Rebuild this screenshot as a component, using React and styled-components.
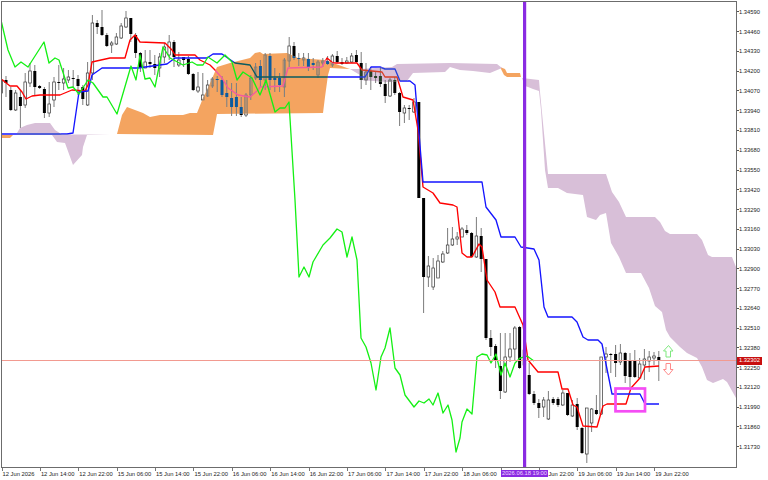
import styled, { createGlobalStyle } from 'styled-components';

const GlobalStyle = createGlobalStyle`
  html, body {
    margin: 0;
    padding: 0;
    background: #fff;
  }
`;

const Page = styled.div`
  position: relative;
  width: 768px;
  height: 480px;
  overflow: hidden;
  background: #fff;
  font-family: 'Liberation Sans', Arial, sans-serif;
  font-size: 5.8px;
  color: #1c1c1c;
`;

const ChartRow = styled.div`
  display: flex;
  height: 468px;
  padding: 1px 0 0 1px;
  box-sizing: border-box;
`;

const Plot = styled.div`
  width: 736px;
  height: 467px;
  box-sizing: border-box;
  border: 1px solid #6c6c6c;
  flex: none;
`;

const ChartSvg = styled.svg`
  display: block;
  width: 734px;
  height: 465px;
  filter: blur(0.3px);
`;

const PriceAxis = styled.div`
  display: flex;
  flex-direction: column;
  padding-top: 1px;
`;

const PriceRow = styled.div`
  display: flex;
  align-items: center;
  height: 19.77px;
  white-space: nowrap;

  &::before {
    content: '';
    width: 2px;
    height: 1px;
    background: #555;
  }
`;

const TimeAxis = styled.div`
  display: flex;
  padding-left: 1.5px;
`;

const TimeCell = styled.div`
  flex: none;
  width: 38.4px;
  height: 12px;
  box-sizing: border-box;
  padding: 2.5px 0 0 ${({ $inset }) => $inset || 1}px;
  white-space: nowrap;
  position: relative;

  &::before {
    content: '';
    position: absolute;
    left: 0;
    top: 0;
    width: 1px;
    height: 3px;
    background: #777;
  }
`;

const PriceTag = styled.div`
  position: absolute;
  left: 737px;
  top: 357px;
  width: 25px;
  height: 7.5px;
  line-height: 7.5px;
  padding-left: 2px;
  box-sizing: border-box;
  background: #c80f0f;
  color: #fff;
  white-space: nowrap;
`;

const DateTag = styled.div`
  position: absolute;
  left: 501px;
  top: 470px;
  width: 47px;
  height: 7px;
  line-height: 7px;
  text-align: center;
  background: #8a2be2;
  color: #eadcff;
  white-space: nowrap;
`;

const prices = [
  '1.34590', '1.34460', '1.34330', '1.34200', '1.34070', '1.33940', '1.33810', '1.33680',
  '1.33550', '1.33420', '1.33290', '1.33160', '1.33030', '1.32900', '1.32770', '1.32640',
  '1.32510', '1.32380', '1.32250', '1.32120', '1.31990', '1.31860', '1.31730',
];

// the date tag hides the two labels under it, only the end of 18 Jun 22:00 shows
const times = [
  { label: '12 Jun 2026' }, { label: '12 Jun 14:00' }, { label: '12 Jun 22:00' }, { label: '15 Jun 06:00' },
  { label: '15 Jun 14:00' }, { label: '15 Jun 22:00' }, { label: '16 Jun 06:00' }, { label: '16 Jun 14:00' },
  { label: '16 Jun 22:00' }, { label: '17 Jun 06:00' }, { label: '17 Jun 14:00' }, { label: '17 Jun 22:00' },
  { label: '18 Jun 06:00' }, { label: '' }, { label: 'Jun 22:00', inset: 9.5 },
  { label: '19 Jun 06:00' }, { label: '19 Jun 14:00' }, { label: '19 Jun 22:00' },
];

// wick top, body top, body bottom, wick bottom, black?
const candles = [
  [76, 80, 93, 95, 0], [76, 80, 83, 97, 1], [87, 90, 110, 111, 1], [90, 93, 110, 111, 0],
  [90, 97, 106, 128, 1], [73, 82, 105, 108, 0], [63, 71, 83, 87, 0], [65, 71, 87, 95, 1],
  [85, 86, 88, 89, 1], [87, 89, 113, 118, 1], [82, 104, 113, 117, 0], [77, 82, 100, 107, 0],
  [65, 82, 83, 90, 1], [68, 79, 83, 90, 0], [70, 77, 80, 83, 0], [70, 78, 79, 87, 1],
  [75, 79, 86, 95, 1], [85, 87, 99, 105, 1], [62, 73, 105, 106, 0], [15, 23, 73, 80, 0],
  [20, 23, 27, 34, 1], [10, 27, 35, 36, 1], [33, 35, 46, 47, 1], [41, 43, 45, 53, 0],
  [33, 37, 44, 45, 0], [23, 26, 38, 39, 0], [11, 18, 27, 28, 0], [18, 18, 34, 42, 1],
  [33, 35, 53, 58, 1], [52, 53, 68, 72, 1], [50, 62, 68, 68, 0], [50, 62, 64, 68, 1],
  [55, 64, 68, 75, 1], [53, 57, 68, 77, 0], [43, 47, 57, 63, 0], [35, 42, 55, 60, 0],
  [40, 42, 57, 67, 1], [52, 60, 65, 67, 0], [57, 57, 60, 67, 1], [56, 59, 74, 75, 1],
  [73, 74, 90, 91, 1], [72, 87, 91, 93, 0], [73, 95, 100, 100, 0], [80, 85, 96, 97, 0],
  [77, 79, 86, 88, 0], [76, 79, 80, 92, 1], [76, 80, 95, 97, 1], [80, 93, 97, 107, 1],
  [83, 98, 107, 116, 1], [83, 97, 107, 116, 1], [97, 107, 115, 117, 1], [93, 95, 115, 117, 0],
  [75, 78, 95, 100, 0], [63, 67, 78, 80, 0], [60, 66, 80, 87, 1], [53, 55, 80, 90, 0],
  [53, 56, 80, 90, 1], [68, 78, 80, 92, 1], [73, 78, 85, 92, 1], [58, 60, 87, 97, 0],
  [37, 46, 61, 67, 0], [42, 46, 58, 60, 1], [53, 58, 59, 66, 1], [53, 58, 60, 66, 0],
  [53, 59, 67, 71, 1], [58, 63, 65, 70, 1], [60, 62, 75, 78, 0], [58, 61, 63, 67, 0],
  [56, 61, 64, 65, 1], [54, 56, 65, 67, 0], [51, 56, 62, 63, 1], [58, 62, 64, 65, 1],
  [57, 61, 63, 64, 0], [53, 56, 62, 63, 0], [50, 55, 62, 63, 1], [52, 63, 80, 89, 1],
  [63, 72, 80, 85, 0], [67, 71, 77, 90, 1], [72, 76, 78, 83, 1], [67, 76, 84, 87, 1],
  [80, 84, 96, 103, 1], [78, 80, 96, 97, 0], [77, 80, 93, 95, 1], [92, 93, 112, 126, 1],
  [105, 108, 113, 123, 0], [105, 108, 109, 120, 1], [98, 102, 112, 113, 0], [102, 102, 198, 198, 1],
  [198, 198, 277, 313, 1], [256, 266, 277, 287, 0], [258, 268, 287, 290, 0], [255, 261, 278, 278, 0],
  [251, 254, 262, 263, 0], [228, 245, 253, 254, 0], [227, 239, 245, 246, 0], [232, 237, 239, 245, 0],
  [227, 229, 237, 237, 0], [225, 230, 233, 235, 1], [232, 233, 257, 257, 1], [217, 236, 257, 258, 0],
  [228, 236, 259, 272, 1], [259, 259, 338, 340, 1], [330, 338, 347, 356, 1], [344, 346, 361, 368, 1],
  [333, 366, 391, 399, 1], [333, 357, 392, 393, 0], [333, 349, 357, 362, 0], [326, 328, 349, 360, 0],
  [326, 327, 368, 369, 1], [343, 350, 365, 370, 0], [363, 375, 394, 395, 1], [391, 394, 403, 405, 1],
  [399, 403, 408, 418, 1], [397, 400, 407, 417, 0], [391, 400, 419, 420, 0], [397, 399, 403, 405, 1],
  [397, 399, 405, 407, 1], [390, 393, 405, 406, 0], [393, 393, 415, 416, 1], [400, 405, 416, 417, 0],
  [398, 404, 427, 430, 1], [427, 428, 453, 454, 1], [408, 408, 454, 463, 0], [408, 409, 423, 432, 0],
  [395, 410, 414, 415, 1], [357, 357, 414, 415, 0], [347, 354, 357, 373, 0], [353, 354, 355, 373, 1],
  [345, 354, 363, 377, 1], [344, 353, 362, 365, 0], [352, 353, 376, 383, 1], [353, 361, 377, 387, 1],
  [350, 361, 377, 378, 1], [358, 364, 378, 379, 0], [349, 359, 365, 380, 0], [351, 357, 361, 372, 0],
  [352, 356, 358, 365, 0], [351, 357, 361, 381, 1],
];

const pts = (list) => list.map((p) => p.join(',')).join(' ');

const tenkan = pts([
  [2, 79.5], [5, 82], [10, 86], [17, 86], [22, 92], [26, 99], [32, 96], [40, 95], [60, 95], [72, 90], [85, 91],
  [88, 85], [92, 62], [110, 58], [125, 58], [130, 40], [135, 35], [140, 42], [165, 43], [172, 50], [175, 55],
  [195, 55], [200, 60], [210, 65], [215, 70], [222, 78], [228, 88], [238, 95], [250, 97], [258, 90], [260, 87],
  [283, 86], [288, 68], [322, 67], [327, 58], [333, 63], [357, 63], [362, 70], [382, 72], [385, 77], [397, 77],
  [403, 97], [413, 100], [418, 130], [423, 187], [433, 193], [440, 203], [453, 205], [457, 207], [462, 253],
  [467, 257], [472, 257], [479, 244], [482, 247], [487, 280], [495, 292], [500, 307], [515, 307], [523, 325],
  [528, 360], [538, 372], [558, 372], [562, 389], [568, 389], [573, 405], [577, 407], [583, 426], [597, 427],
  [603, 406], [607, 404], [626, 404], [631, 388], [640, 378], [645, 367], [659, 366],
]);

const kijun = pts([
  [2, 134], [67, 134], [73, 133], [79, 92], [88, 91], [92, 75], [102, 68], [138, 68], [167, 64], [175, 58],
  [207, 58], [213, 54], [222, 54], [235, 63], [250, 65], [257, 77], [365, 77], [371, 67], [380, 67], [385, 69],
  [395, 69], [400, 81], [410, 81], [415, 85], [423, 182], [482, 182], [486, 207], [496, 220], [501, 237],
  [515, 237], [521, 247], [534, 249], [539, 260], [544, 307], [548, 317], [572, 317], [577, 322], [583, 337],
  [588, 340], [598, 340], [602, 344], [612, 394], [640, 394], [645, 404], [659, 404],
]);

const chikou = pts([
  [1, 20], [8, 50], [15, 67], [21, 62], [28, 67], [44, 42], [49, 63], [55, 58], [59, 60], [68, 88], [73, 87],
  [79, 94], [88, 80], [93, 83], [103, 97], [107, 97], [117, 114], [131, 66], [136, 80], [140, 55], [145, 79],
  [150, 78], [155, 87], [163, 47], [170, 58], [183, 65], [192, 62], [197, 65], [203, 65], [208, 57], [217, 63],
  [225, 55], [232, 62], [237, 80], [243, 72], [252, 78], [260, 95], [266, 80], [275, 112], [280, 108], [285, 108],
  [289, 102], [295, 200], [299, 277], [304, 267], [309, 277], [313, 262], [323, 245], [330, 238], [337, 229],
  [342, 232], [347, 257], [352, 237], [357, 260], [361, 338], [366, 347], [371, 363], [376, 390], [381, 357],
  [385, 348], [390, 328], [395, 368], [400, 375], [405, 395], [414, 407], [419, 401], [424, 403], [429, 399],
  [433, 405], [438, 393], [443, 413], [448, 405], [452, 420], [456, 452], [460, 438], [462, 422], [467, 409],
  [472, 414], [477, 357], [482, 354], [487, 355], [491, 363], [496, 354], [501, 375], [505, 363], [510, 377],
  [515, 363], [520, 358], [527, 356], [534, 361],
]);

const orangeClouds = [
  pts([
    [117, 134], [122, 115], [127, 107], [143, 113], [150, 117], [160, 115], [183, 115], [190, 113], [197, 113],
    [203, 98], [208, 88], [217, 67], [230, 63], [250, 58], [255, 53], [260, 52], [263, 54], [287, 53], [298, 58],
    [325, 60], [333, 63], [347, 68], [350, 69], [330, 68], [328, 75], [325, 97], [323, 113], [217, 114], [213, 135],
  ]),
  pts([[2, 135], [13, 135], [10, 138], [2, 138]]),
  pts([[500, 67], [505, 69], [507, 73], [520, 73], [521, 77], [507, 77], [504, 75]]),
];

const purpleClouds = [
  pts([
    [17, 133], [20, 128], [27, 125], [35, 123], [50, 123], [55, 130], [62, 134.5], [110, 134.5], [87, 135], [83, 147],
    [82, 155], [73, 165], [65, 143], [57, 142], [52, 135], [17, 135],
  ]),
  pts([
    [350, 69], [360, 69], [392, 67], [397, 64], [450, 63], [497, 64], [502, 68], [490, 73], [473, 71], [460, 70],
    [450, 67], [445, 72], [413, 73], [407, 81], [400, 81], [392, 82], [387, 82], [360, 80], [360, 75],
  ]),
  pts([
    [522, 78], [539, 80], [540, 92], [543, 123], [548, 174], [606, 174], [612, 192], [619, 202], [626, 217],
    [655, 217], [660, 222], [665, 231], [670, 234], [697, 234], [702, 240], [708, 255], [712, 257], [732, 257],
    [736, 267], [736, 398], [727, 382], [723, 379], [713, 383], [707, 380], [702, 367], [697, 358], [687, 353],
    [680, 347], [670, 337], [666, 330], [662, 312], [655, 306], [649, 288], [641, 273], [626, 273], [619, 257],
    [611, 243], [606, 213], [600, 215], [596, 220], [587, 217], [583, 195], [567, 193], [558, 188], [548, 188],
    [545, 170], [541, 110], [539, 91], [533, 89], [528, 87], [525, 86],
  ]),
];

// what a colour becomes where the XOR-filled cloud covers it
const plain = { ink: '#000', wick: '#444', edge: '#333', paper: '#fff', red: '#f00', blue: '#1414ff' };
const onOrange = { ink: '#0b5b9f', wick: '#3f6f96', edge: '#7d7a72', paper: 'none', red: '#f45b9f', blue: '#0b5b60' };
const onPurple = { ink: '#274027', wick: '#4d5a4d', edge: '#4d5a4d', paper: 'none', red: '#d84027', blue: '#2740d8' };

function Candles({ palette }) {
  return candles.map(([top, open, close, bottom, black], i) => {
    const x = 1.2 + 4.8 * i;
    return (
      <g key={i}>
        <line x1={x} x2={x} y1={top} y2={bottom} stroke={palette.wick} strokeWidth="0.7" />
        <rect
          x={x - (black ? 1.5 : 1.3)}
          y={open}
          width={black ? 3 : 2.6}
          height={Math.max(close - open, 1)}
          fill={black ? palette.ink : palette.paper}
          stroke={black ? 'none' : palette.edge}
          strokeWidth="0.7"
        />
      </g>
    );
  });
}

function Series({ palette }) {
  return (
    <>
      <Candles palette={palette} />
      <polyline points={tenkan} fill="none" stroke={palette.red} strokeWidth="1.35" strokeLinejoin="round" />
      <polyline points={kijun} fill="none" stroke={palette.blue} strokeWidth="1.35" strokeLinejoin="round" />
    </>
  );
}

function Chart() {
  return (
    <ChartSvg viewBox="2 2 734 465">
      <defs>
        <clipPath id="orange-clip">
          {orangeClouds.map((p) => <polygon key={p} points={p} />)}
        </clipPath>
        <clipPath id="purple-clip">
          {purpleClouds.map((p) => <polygon key={p} points={p} />)}
        </clipPath>
      </defs>

      <Series palette={plain} />
      {orangeClouds.map((p) => <polygon key={p} points={p} fill="#f4a460" />)}
      {purpleClouds.map((p) => <polygon key={p} points={p} fill="#d8bfd8" />)}
      <g clipPath="url(#orange-clip)"><Series palette={onOrange} /></g>
      <g clipPath="url(#purple-clip)"><Series palette={onPurple} /></g>

      <polyline points={chikou} fill="none" stroke="#14f014" strokeWidth="1.3" strokeLinejoin="round" />
      <line x1="2" x2="736" y1="360.5" y2="360.5" stroke="#f29a90" strokeWidth="1" />
      <line x1="524.6" x2="524.6" y1="2" y2="467" stroke="#8a2be2" strokeWidth="3.2" />
      <rect x="615.5" y="388.5" width="29.5" height="22.8" fill="none" stroke="#f44df4" strokeWidth="2.7" />

      <path d="M668.5 345.5 L673 351 H670.5 V357 H666 V351 H663.5 Z" fill="#fff" stroke="#7fe87f" strokeWidth="1" />
      <path d="M666 363.5 H670.5 V369.5 H673 L668.5 375 L663.5 369.5 H666 Z" fill="#fff" stroke="#ff8a8a" strokeWidth="1" />
    </ChartSvg>
  );
}

export default function App() {
  return (
    <Page>
      <GlobalStyle />
      <ChartRow>
        <Plot>
          <Chart />
        </Plot>
        <PriceAxis>
          {prices.map((p) => <PriceRow key={p}>{p}</PriceRow>)}
        </PriceAxis>
      </ChartRow>
      <TimeAxis>
        {times.map((t, i) => <TimeCell key={i} $inset={t.inset}>{t.label}</TimeCell>)}
      </TimeAxis>
      <PriceTag>1.32302</PriceTag>
      <DateTag>2026.06.18 19:00</DateTag>
    </Page>
  );
}
